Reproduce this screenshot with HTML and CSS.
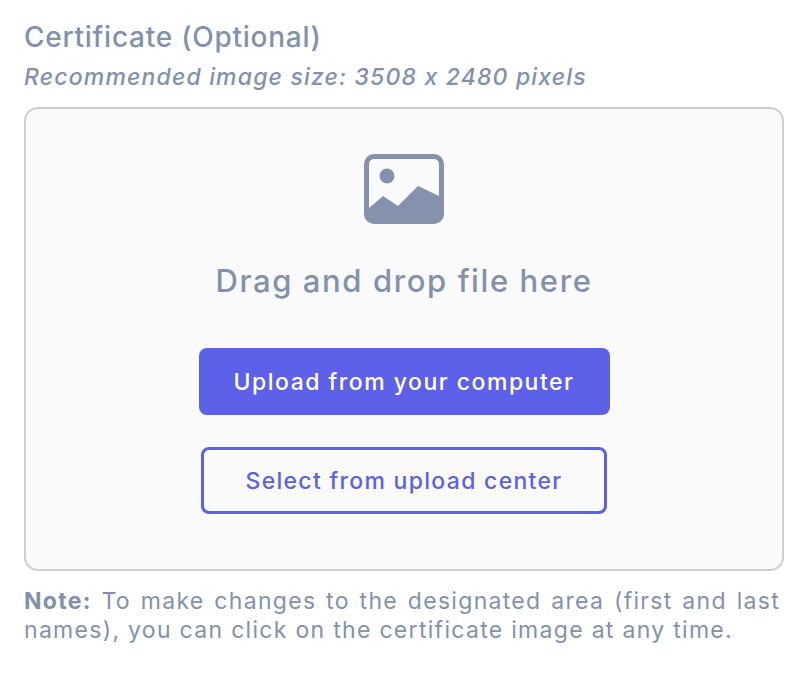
FILE: index.html
```html
<!DOCTYPE html>
<html lang="en">
<head>
    <meta charset="UTF-8">
    <title>Certificate Upload</title>
    <link rel="stylesheet" href="styles.css">
</head>
<body>
    <div class="field">
        <div class="field-title">Certificate (Optional)</div>
        <div class="field-hint">Recommended image size: 3508 x 2480 pixels</div>
        <div class="dropzone">
            <svg class="image-icon" width="80" height="70" viewBox="0 0 80 70">
                <path fill="#8692ad" fill-rule="evenodd" d="M10 0H70A10 10 0 0 1 80 10V60A10 10 0 0 1 70 70H10A10 10 0 0 1 0 60V10A10 10 0 0 1 10 0ZM10 5A5 5 0 0 0 5 10V54L19 42L34 52L54 32L75 42V10A5 5 0 0 0 70 5Z"/>
                <circle cx="23" cy="22" r="7.5" fill="#8692ad"/>
            </svg>
            <div class="drop-text">Drag and drop file here</div>
            <button class="btn btn-primary">Upload from your computer</button>
            <button class="btn btn-outline">Select from upload center</button>
        </div>
        <p class="note"><strong>Note:</strong> To make changes to the designated area (first and last names), you can click on the certificate image at any time.</p>
    </div>
</body>
</html>
```

FILE: styles.css
```css
* {
    margin: 0;
    padding: 0;
    box-sizing: border-box;
}
body {
    background: white;
    color: #8391ad;
    font-family: Inter, "Noto Sans", sans-serif;
    font-feature-settings: "calt" 0;
}
.field {
    width: 760px;
    margin-left: 24px;
    padding-top: 20px;
}
.field-title {
    font-size: 28px;
    line-height: 34px;
    letter-spacing: 0.75px;
    font-weight: 500;
}
.field-hint {
    font-size: 23px;
    line-height: 28px;
    letter-spacing: 1.17px;
    font-style: italic;
    font-weight: 500;
    margin-top: 9px;
}
.dropzone {
    height: 464px;
    margin-top: 16px;
    background: #fafafa;
    border: 2px solid #cfcfcf;
    border-radius: 14px;
    display: flex;
    flex-direction: column;
    align-items: center;
    padding-top: 45px;
}
.image-icon {
    display: block;
}
.drop-text {
    font-size: 31px;
    line-height: 38px;
    letter-spacing: 1.6px;
    font-weight: 500;
    margin-top: 38px;
}
.btn {
    font-family: inherit;
    font-size: 23px;
    font-weight: 500;
    border-radius: 8px;
    cursor: pointer;
}
.btn-primary {
    width: 411px;
    height: 67px;
    margin-top: 48px;
    background: #5d60e8;
    border: none;
    color: white;
    letter-spacing: 1.5px;
}
.btn-outline {
    width: 406px;
    height: 67px;
    margin-top: 32px;
    background: transparent;
    border: 3px solid #5d60e8;
    color: #5d60e8;
    letter-spacing: 1.3px;
}
.note {
    width: 756px;
    margin-top: 16px;
    font-size: 23px;
    line-height: 29px;
    letter-spacing: 1.3px;
    text-align: justify;
}
.note strong {
    font-weight: 700;
}
```
